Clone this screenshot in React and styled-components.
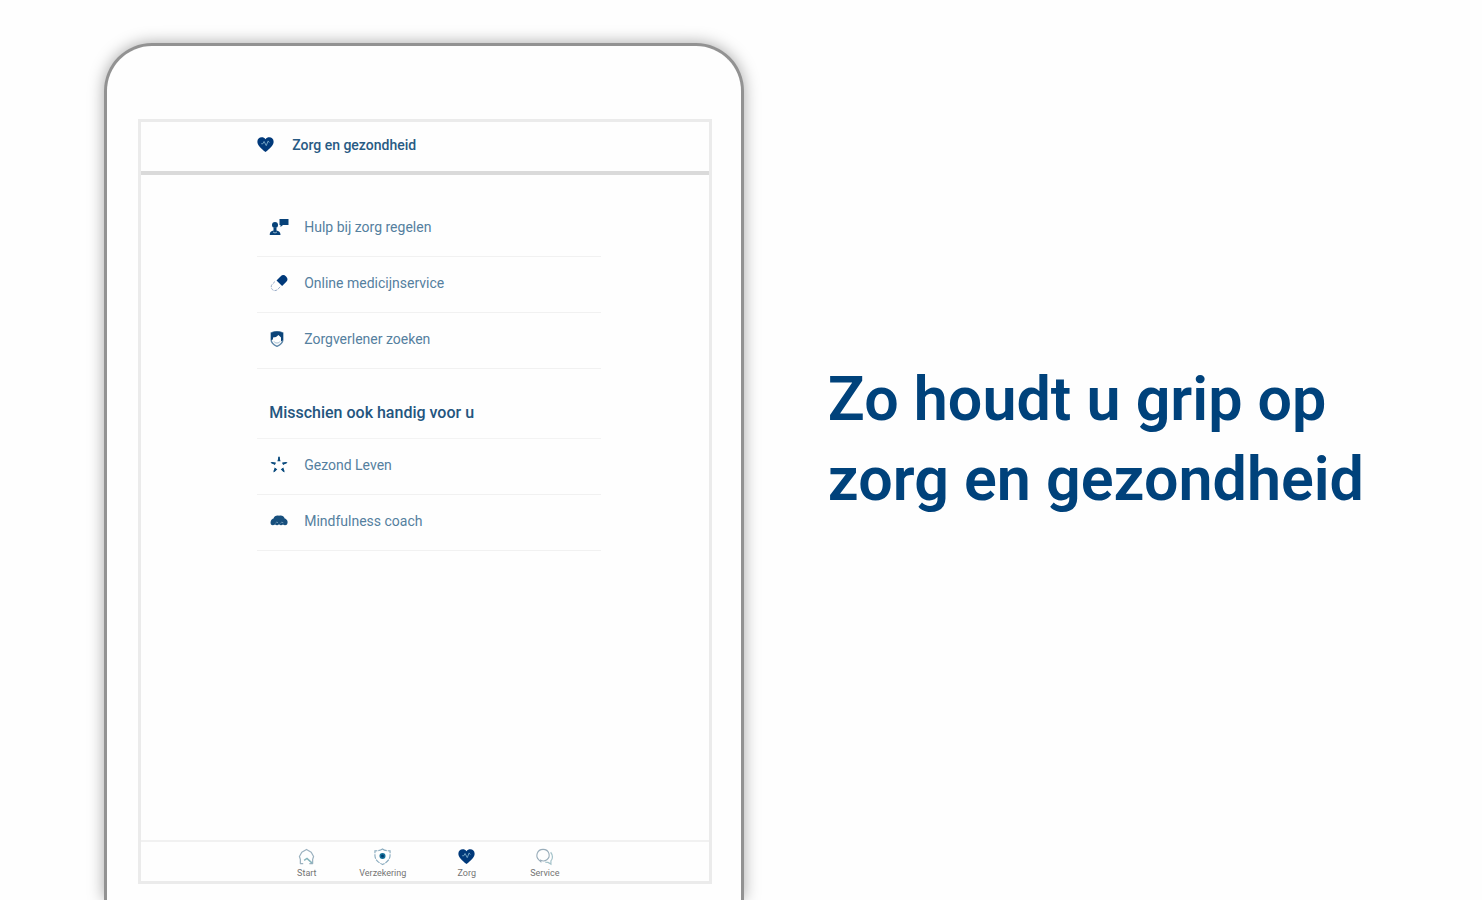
import React from "react";
import styled, { createGlobalStyle } from "styled-components";

const GlobalStyle = createGlobalStyle`
  *, *::before, *::after { box-sizing: border-box; }
  body {
    margin: 0;
    background: #fefefe;
    color: #00407a;
    font-family: Roboto, "Liberation Sans", sans-serif;
  }
  h1, h2, p, ul { margin: 0; padding: 0; }
  ul { list-style: none; }
  a { color: inherit; text-decoration: none; }
`;

const Page = styled.main`
  display: grid;
  grid-template-columns: minmax(0, 640fr) minmax(0, 654fr);
  column-gap: 84px;
  min-height: 100vh;
  padding-left: 7%;
  overflow: hidden;
`;

const Device = styled.section`
  display: flex;
  flex-direction: column;
  margin-top: 43px;
  padding: 73px 29px 16px 31px;
  border: 3px solid #929292;
  border-bottom: 0;
  border-radius: 48px 48px 0 0;
  background: #fefefe;
  box-shadow: 0 0 16px rgba(0, 0, 0, 0.35);
`;

const Screen = styled.div`
  display: flex;
  flex: 1;
  flex-direction: column;
  border: 3px solid #ebebeb;
`;

const Column = styled.div`
  margin: 0 19% 0 20.5%;
`;

const Header = styled.header`
  border-bottom: 4px solid #dadada;
`;

const HeaderRow = styled(Column)`
  display: flex;
  align-items: center;
  gap: 18px;
  height: 49px;
  padding-bottom: 4px;
`;

const Title = styled.h1`
  font-size: 14px;
  font-weight: 500;
  line-height: 20px;
  color: #285a83;
`;

const Content = styled(Column)`
  flex: 1;
  padding-top: 26px;
`;

const SectionTitle = styled.h2`
  padding: 33px 0 14px 12px;
  border-bottom: 1px solid #f3f3f3;
  font-size: 16px;
  font-weight: 500;
  line-height: 22px;
  color: #24557e;
`;

const Row = styled.a`
  display: flex;
  align-items: center;
  gap: 16px;
  height: 56px;
  padding: 0 12px 3px;
  border-bottom: 1px solid #f1f1f1;
  font-size: 14px;
  line-height: 20px;
  color: #55809f;
`;

const TabBar = styled.nav`
  display: grid;
  grid-template-columns: 70px 82px 86px 70px;
  justify-content: center;
  padding: 6px 0 2px 2px;
  border-top: 2px solid #f1f1f1;
`;

const Tab = styled.a`
  display: flex;
  flex-direction: column;
  align-items: center;
  gap: 2px;
  font-size: 9px;
  line-height: 12px;
  color: #747474;
`;

const Icon = styled.svg`
  display: block;
  flex: none;
  width: ${(p) => p.$size || 18}px;
  height: ${(p) => p.$size || 18}px;
  overflow: visible;
`;

const Slogan = styled.p`
  align-self: center;
  padding-bottom: 22px;
  font-size: 61px;
  font-weight: 600;
  line-height: 80px;
  color: #00427b;
`;

const HeartIcon = ({ size }) => (
  <Icon $size={size} viewBox="0 0 18 18" aria-hidden="true">
    <path d="M9 17C4 12.800.4 9.800.4 6 .4 3.300 2.400 1.400 5 1.400c1.600 0 3 .7 4 2 1-1.300 2.400-2 4-2 2.600 0 4.600 1.900 4.600 4.600 0 3.800-3.600 6.800-8.600 11z" fill="#00397a" />
    <path d="M4.500 8.200h1.700l1.300-2.400 2.300 4.400 2-5 1.200 1.800" fill="none" stroke="#76a6c6" strokeWidth="1" />
  </Icon>
);

const AdviceIcon = () => (
  <Icon viewBox="0 0 18 18" aria-hidden="true">
    <g fill="#074279">
      <path d="M9.500 1h9v6h-5.500l-2.500 2V7h-1z" />
      <circle cx="5" cy="7" r="3" />
      <path d="M3.500 10h3v2.500c2.200.3 4 1.500 4 4.500H-.3c0-3 1.600-4.200 3.800-4.500z" />
    </g>
    <path d="M3 14l2 1 2-1" fill="none" stroke="#8db1c9" />
  </Icon>
);

const PillIcon = () => (
  <Icon viewBox="0 0 18 18" aria-hidden="true">
    <path d="M6.500 6.500l4-4a3.800 3.800 0 0 1 5.600 5.600l-4 4z" fill="#00397a" />
    <path d="M5 7.500L2.300 10.200a3.700 3.700 0 0 0 5.300 5.300l3-3" fill="none" stroke="#9badc8" strokeWidth="1" strokeDasharray="3 1" />
  </Icon>
);

const ShieldPersonIcon = () => (
  <Icon $size={16} viewBox="0 0 16 16" aria-hidden="true">
    <path d="M2.200 2Q8-.6 13.800 2v7c0 3-2.500 4.800-5.800 6.300C4.700 13.800 2.200 12 2.200 9z" fill="#fefefe" stroke="#5d86a8" strokeWidth="1.400" />
    <path d="M2 2Q8-.8 14 2v7l-2 1.500V6.500L9.500 4 7 6 4 6.500v2L2 9z" fill="#0b4479" />
    <path d="M5 10.500c1 2 5 2 6 0" fill="none" stroke="#9db9ce" />
  </Icon>
);

const StarIcon = () => (
  <Icon viewBox="0 0 18 18" aria-hidden="true">
    <g fill="#0b4b7e">
      <path d="M9 0l1.600 5.200H7.400z" />
      <path d="M.3 6.200l5.600.3-1.100 2.600z" />
      <path d="M17.700 6.200l-5.600.3 1.100 2.600z" />
      <path d="M3.400 16.600l1.200-5.200 2.700 2z" />
      <path d="M14.600 16.600l-1.200-5.200-2.700 2z" />
    </g>
    <g stroke="#0b4b7e" strokeWidth="1.600" strokeLinecap="round">
      <path d="M9 1.500v2.500M2 6.800l2.600.7M16 6.800l-2.600.7M4.400 15l1.100-1.800M13.600 15l-1.100-1.800" />
    </g>
  </Icon>
);

const MindIcon = () => (
  <Icon viewBox="0 0 18 18" aria-hidden="true">
    <path d="M1 12.500C-.2 9.500 1.500 7 3.500 6.500 4 4 7 3 9 3.800c2.500-.8 5 .2 5.700 2.700 2.500.7 3.800 3.500 2.300 6-1 1-3 1-4 0-1.500 1-3 .8-4-.3-1 1.200-2.500 1.200-4 .3-1.500 1.100-3.300.8-4 0z" fill="#174f7d" />
    <path d="M5.500 11.200q1-1.700 2.500-.6M10.500 11.200q1-1.700 2.800-.5" fill="none" stroke="#6f97b5" />
  </Icon>
);

const HomeIcon = () => (
  <Icon $size={17} viewBox="0 0 18 18" aria-hidden="true">
    <path d="M5.500 16.500H2.500V12L1.500 9 4 4.500l5-3 5 3L16.500 9l-1 3v4.500H12" fill="none" stroke="#9bb1bf" strokeWidth="1.300" strokeLinejoin="round" />
    <path d="M6.500 13l3-2 5.500 5" fill="none" stroke="#87b4bc" strokeWidth="1.600" />
  </Icon>
);

const InsuranceIcon = () => (
  <Icon $size={17} viewBox="0 0 18 18" aria-hidden="true">
    <path d="M9 1c2 1.500 4.500 2 8 2v5c0 4-3 7.200-8 9.500C4 15.200 1 12 1 8V3c3.500 0 6-.5 8-2z" fill="none" stroke="#8aabbe" strokeWidth="1.200" strokeDasharray="5 1" />
    <circle cx="9" cy="8.500" r="3.200" fill="#147098" />
    <circle cx="9" cy="8.500" r="1.600" fill="#003c72" />
  </Icon>
);

const ChatIcon = () => (
  <Icon $size={17} viewBox="0 0 18 18" aria-hidden="true">
    <path d="M5 14.500l-2-2C-1 9 1 1.500 7.500 1.500S16 9 11.500 12.500c-2 1.500-4.500 1.500-6.500.5z" fill="none" stroke="#99adba" strokeWidth="1.200" />
    <path d="M15.500 4.500c2.500 3 2.500 7 .3 9.200v3.300l-3-1.800c-1 .2-2 .2-3-.3" fill="none" stroke="#a5c3ca" strokeWidth="1.300" />
  </Icon>
);

const IconSlot = styled.span`
  display: flex;
  justify-content: ${(p) => p.$align || "center"};
  width: 19px;
`;

const careItems = [
  { label: "Hulp bij zorg regelen", icon: AdviceIcon },
  { label: "Online medicijnservice", icon: PillIcon },
  { label: "Zorgverlener zoeken", icon: ShieldPersonIcon, align: "flex-start" },
];

const moreItems = [
  { label: "Gezond Leven", icon: StarIcon },
  { label: "Mindfulness coach", icon: MindIcon },
];

const tabs = [
  { label: "Start", icon: HomeIcon },
  { label: "Verzekering", icon: InsuranceIcon },
  { label: "Zorg", icon: HeartIcon },
  { label: "Service", icon: ChatIcon },
];

const LinkList = ({ items }) => (
  <ul>
    {items.map(({ label, icon: Glyph, align }) => (
      <li key={label}>
        <Row href="#">
          <IconSlot $align={align}><Glyph /></IconSlot>
          {label}
        </Row>
      </li>
    ))}
  </ul>
);

export default function App() {
  return (
    <>
      <GlobalStyle />
      <Page>
        <Device>
          <Screen>
            <Header>
              <HeaderRow>
                <HeartIcon size={17} />
                <Title>Zorg en gezondheid</Title>
              </HeaderRow>
            </Header>
            <Content>
              <LinkList items={careItems} />
              <SectionTitle>Misschien ook handig voor u</SectionTitle>
              <LinkList items={moreItems} />
            </Content>
            <TabBar aria-label="Hoofdmenu">
              {tabs.map(({ label, icon: Glyph }) => (
                <Tab key={label} href="#" aria-current={label === "Zorg" ? "page" : undefined}>
                  <Glyph size={17} />
                  {label}
                </Tab>
              ))}
            </TabBar>
          </Screen>
        </Device>
        <Slogan>
          Zo houdt u grip op
          <br />
          zorg en gezondheid
        </Slogan>
      </Page>
    </>
  );
}
